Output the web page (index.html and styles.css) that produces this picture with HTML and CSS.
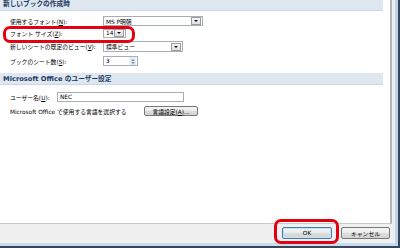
FILE: index.html
```html
<!DOCTYPE html>
<html lang="ja">
<head>
    <meta charset="UTF-8">
    <meta name="viewport" content="width=device-width, initial-scale=1.0">
    <title>Excel のオプション</title>
    <link rel="stylesheet" href="styles.css">
</head>
<body>
    <div class="window">
        <div class="client">
            <div class="panel">
                <div class="section-title first">新しいブックの作成時</div>
                <div class="form">
                    <div class="row r1">
                        <span class="label">使用するフォント(<u>N</u>):</span>
                        <div class="combo combo-font"><span class="value">MS P明朝</span><span class="drop"></span></div>
                    </div>
                    <div class="row r2">
                        <span class="label">フォント サイズ(<u>Z</u>):</span>
                        <div class="combo combo-size"><span class="value">14</span><span class="drop"></span></div>
                    </div>
                    <div class="row r3">
                        <span class="label">新しいシートの既定のビュー(<u>V</u>):</span>
                        <div class="combo combo-view"><span class="value">標準ビュー</span><span class="drop"></span></div>
                    </div>
                    <div class="row r4">
                        <span class="label">ブックのシート数(<u>S</u>):</span>
                        <div class="spinner"><span class="value">3</span><span class="spin"><i class="up"></i><i class="down"></i></span></div>
                    </div>
                </div>
                <div class="section-title second">Microsoft Office のユーザー設定</div>
                <div class="form form-user">
                    <div class="row">
                        <span class="label label-user">ユーザー名(<u>U</u>):</span>
                        <div class="textbox">NEC</div>
                    </div>
                    <div class="row">
                        <span class="label label-lang">Microsoft Office で使用する言語を選択する</span>
                        <button class="btn btn-lang">言語設定(<u>A</u>)...</button>
                    </div>
                </div>
            </div>
            <div class="footer">
                <button class="btn btn-ok">OK</button>
                <button class="btn btn-cancel">キャンセル</button>
            </div>
        </div>

        <!-- red annotation marks -->
        <div class="mark mark-size"></div>
        <div class="mark mark-ok"></div>
    </div>
</body>
</html>
```

FILE: styles.css
```css
* {
    box-sizing: border-box;
    margin: 0;
    padding: 0;
}

body {
    font-family: "DejaVu Sans", "Noto Sans CJK JP", sans-serif;
    font-size: 5.8px;
    color: #000000;
    background-color: #ffffff;
}

.window {
    position: relative;
    width: 400px;
    height: 248px;
    border-right: 2px solid #3b4556;
    border-bottom: 2px solid #3b4556;
}

.client {
    display: flex;
    flex-direction: column;
    height: 100%;
    padding-right: 3px;
    background-color: #f0f0f0;
    border-right: 3px solid #bcd5ee;
    border-bottom: 3px solid #c6dcf1;
}

.panel {
    flex: 1;
    padding-right: 7px;
    background-color: #ffffff;
    border-right: 2px solid #b4b4b4;
    border-bottom: 1px solid #cacaca;
}

.section-title {
    padding-left: 3px;
    font-weight: bold;
    font-size: 6.7px;
    color: #1c3a62;
    background-color: #dfe8f1;
    border-bottom: 1px solid #cbd7e3;
}

.section-title.first {
    height: 11px;
    line-height: 9px;
}

.section-title.second {
    height: 12px;
    line-height: 12px;
    margin-top: 5px;
}

.form {
    padding-top: 4px;
}

.form-user {
    padding-top: 5px;
}

.row {
    display: flex;
    align-items: center;
    height: 14px;
    padding-left: 10px;
}

.r1 { height: 12px; }
.r2 { height: 12px; }
.r3 { height: 15px; }
.r4 { height: 14px; }

.label {
    width: 93px;
    white-space: nowrap;
}

.label-user {
    width: 47px;
}

.label-lang {
    width: 134px;
}

.combo, .spinner, .textbox {
    display: flex;
    align-items: center;
    justify-content: space-between;
    height: 10px;
    padding: 0 1px 0 2px;
    background-color: #ffffff;
    border: 1px solid #a7aeb8;
}

.combo-font { width: 100px; }
.combo-size { width: 23px; height: 9px; }
.combo-view { width: 80px; height: 11px; }

.drop {
    position: relative;
    width: 10px;
    height: 8px;
    background: linear-gradient(#f6f6f6, #dedede);
    border: 1px solid #9c9c9c;
}

.drop::after {
    content: "";
    position: absolute;
    left: 2px;
    top: 2px;
    border-left: 2px solid transparent;
    border-right: 2px solid transparent;
    border-top: 2px solid #111111;
}

.spinner {
    width: 35px;
}

.spin {
    display: flex;
    flex-direction: column;
    align-items: center;
    justify-content: center;
    gap: 1px;
    width: 7px;
    height: 8px;
    background-color: #e8eef5;
}

.spin i {
    display: block;
    border-left: 2px solid transparent;
    border-right: 2px solid transparent;
}

.spin .up { border-bottom: 2px solid #7b8fa6; }
.spin .down { border-top: 2px solid #7b8fa6; }

.textbox {
    width: 127px;
    border-color: #abadb3;
}

.btn {
    height: 10px;
    font-family: inherit;
    font-size: 5.8px;
    color: #000000;
    background: linear-gradient(#f4f4f4 0%, #ebebeb 50%, #dcdcdc 51%, #d4d4d4 100%);
    border: 1px solid #777777;
    border-radius: 2px;
    cursor: pointer;
}

.btn-lang {
    width: 54px;
}

.footer {
    display: flex;
    justify-content: flex-end;
    gap: 9px;
    height: 19px;
    padding: 3px 2px 0 0;
}

.btn-ok, .btn-cancel {
    height: 12px;
}

.btn-ok {
    width: 50px;
    border-color: #3c7fb1;
    box-shadow: inset 0 0 0 1px #bfe4f8;
}

.btn-cancel {
    width: 49px;
}

.mark {
    position: absolute;
    border: 3px solid #e3000f;
    border-radius: 7px;
}

.mark-size {
    left: 3px;
    top: 26px;
    width: 132px;
    height: 17px;
}

.mark-ok {
    left: 274px;
    top: 219px;
    width: 65px;
    height: 25px;
}
```
